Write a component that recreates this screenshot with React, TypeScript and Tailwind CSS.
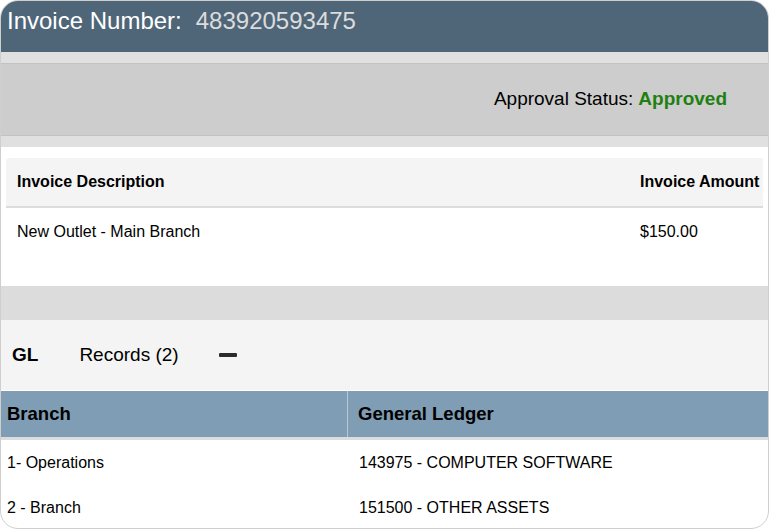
import React from 'react';

const glRows = [
  { branch: '1- Operations', ledger: '143975 - COMPUTER SOFTWARE' },
  { branch: '2 - Branch', ledger: '151500 - OTHER ASSETS' },
];

function App() {
  return (
    <div className="w-[770px] h-[530px] bg-white font-['Liberation_Sans',Arial,sans-serif] text-black">
      <div className="w-[769px] h-[529px] border border-[#cfcfcf] rounded-[18px] overflow-hidden flex flex-col">
        {/* title bar */}
        <div className="h-[51px] shrink-0 bg-[#4f6679] pl-[6px] pt-[6px] text-[24px] leading-[28px] flex">
          <span className="text-white">Invoice Number:</span>
          <span className="ml-[14px] text-[#dcdcdc]">483920593475</span>
        </div>

        {/* approval band */}
        <div className="bg-[#e0e0e0] py-[11px] shrink-0">
          <div className="h-[73px] bg-[#cdcdcd] border-y border-[#c2c2c2] flex items-center justify-end pr-[41px] text-[19px]">
            <span>Approval Status:</span>
            <span className="ml-[5px] font-bold text-[#1f8011]">Approved</span>
          </div>
        </div>

        {/* invoice table */}
        <div className="px-[5px] pt-[11px] shrink-0">
          <div className="rounded-tl-[4px] overflow-hidden">
            <div className="flex h-[50px] items-center bg-[#f4f4f4] border-b-2 border-[#dcdcdc] text-[16px] font-bold">
              <div className="w-[623px] pl-[11px]">Invoice Description</div>
              <div className="flex-1 pl-[11px] whitespace-nowrap overflow-hidden">Invoice Amount</div>
            </div>
            <div className="flex h-[78px] text-[16px] pt-[12px]">
              <div className="w-[623px] pl-[11px]">New Outlet - Main Branch</div>
              <div className="flex-1 pl-[11px]">$150.00</div>
            </div>
          </div>
        </div>

        <div className="h-[34px] bg-[#dcdcdc] shrink-0" />

        {/* GL section */}
        <div className="h-[70px] bg-[#f4f4f4] flex items-center text-[19px] shrink-0">
          <span className="ml-[11px] font-bold">GL</span>
          <span className="ml-[41px]">Records (2)</span>
          <span className="ml-[40px] w-[18px] h-[4px] rounded-[1px] bg-[#2b2b2b]" />
        </div>

        <div className="mt-[1px] flex h-[49px] bg-[#7f9db4] border-b-[3px] border-[#dcdcdc] text-[18.5px] font-bold shrink-0">
          <div className="w-[347px] pl-[6px] flex items-center border-r border-[#b7c8d5]">Branch</div>
          <div className="flex-1 pl-[10px] flex items-center">General Ledger</div>
        </div>

        {glRows.map((r) => (
          <div key={r.branch} className="flex h-[45px] items-center text-[16px] shrink-0">
            <div className="w-[347px] pl-[6px]">{r.branch}</div>
            <div className="flex-1 pl-[11px]">{r.ledger}</div>
          </div>
        ))}
      </div>
    </div>
  );
}

export default App;
